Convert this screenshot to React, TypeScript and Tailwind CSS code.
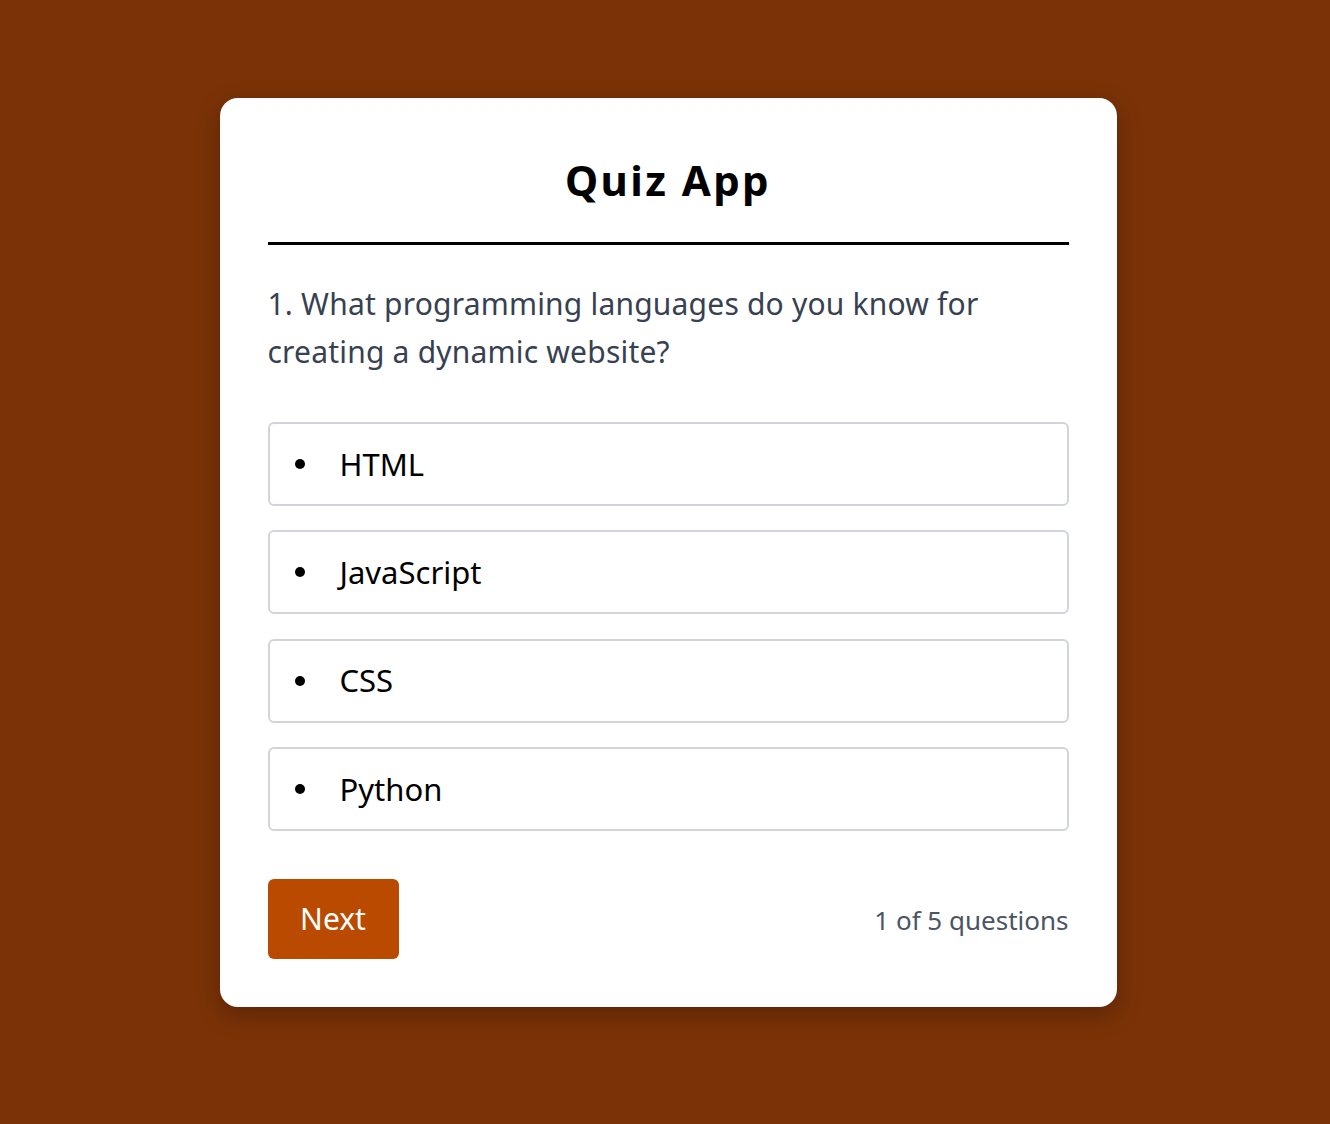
const options = ['HTML', 'JavaScript', 'CSS', 'Python'];

export default function App() {
	return (
		<div className="min-h-screen w-full bg-[#7b3207] pt-[98px] pl-[6px] font-['Noto_Sans',sans-serif]">
			{/* card */}
			<div className="mx-auto w-[897px] rounded-[18px] bg-white p-12 shadow-[0_8px_24px_rgba(0,0,0,0.25)]">
				<h1 className="pt-1 text-center text-[42px] font-bold leading-[60px] tracking-[2.4px] text-black">Quiz App</h1>
				<div className="mt-8 h-[3px] bg-black" />
				<p className="mt-[35px] text-[30px] leading-[48px] tracking-[0.2px] text-[#374151]">
					1. What programming languages do you know for creating a dynamic website?
				</p>
				<ul className="mt-[46px] flex flex-col gap-[24.3px]">
					{options.map((opt, idx) => (
						<li
							key={idx}
							className="flex h-[84px] items-center rounded-md border-2 border-[#d1d5db] pl-[25px] text-[31px] text-black"
						>
							<span className="mr-[35px] h-[10px] w-[10px] rounded-full bg-black" />
							{opt}
						</li>
					))}
				</ul>
				{/* footer */}
				<div className="mt-[48px] flex items-center justify-between">
					<button className="h-[80px] w-[131px] rounded-md bg-[#ba4a00] text-[30px] text-white">Next</button>
					<span className="pt-1 text-[26px] text-[#4b5563]">1 of 5 questions</span>
				</div>
			</div>
		</div>
	);
}
